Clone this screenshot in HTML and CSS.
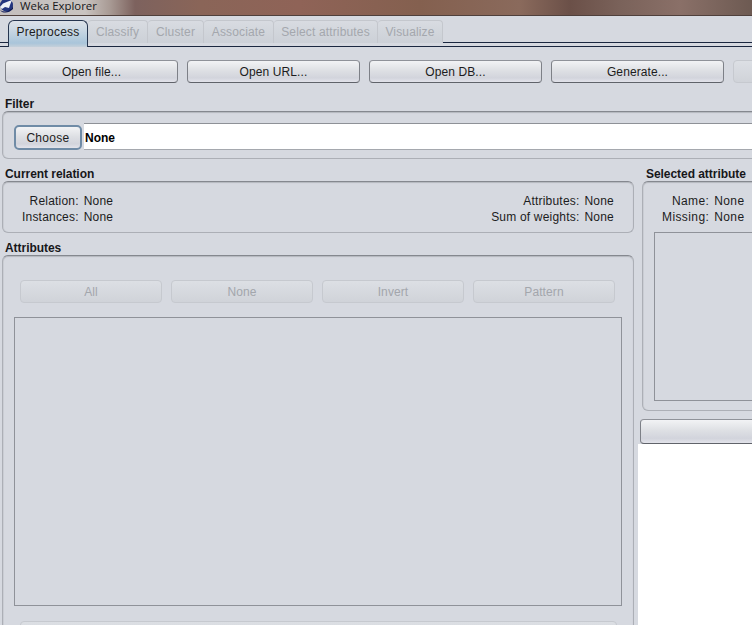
FILE: index.html
```html
<!DOCTYPE html>
<html lang="en">
<head>
<meta charset="utf-8">
<title>Weka Explorer</title>
<link rel="stylesheet" href="styles.css">
</head>
<body>
<div class="app">
  <header class="titlebar">
    <svg class="logo" width="14" height="13" viewBox="0 0 14 13" aria-hidden="true">
      <circle cx="6.5" cy="5" r="6.5" fill="#23357f"/>
      <path d="M0 7 L3 3.5 L8 1.5 L12 0 L10 5 L9 8 L5 7 L2 9 Z" fill="#eef1f7"/>
      <path d="M0 10 Q6 14 12 8 L13 5 L13 9 Q8 14 2 12 Z" fill="#101c58"/>
    </svg>
    <span class="title">Weka Explorer</span>
  </header>
  <nav class="tabstrip">
    <div class="tab-edge"></div>
    <div class="tab tab-active">Preprocess</div>
    <div class="tab">Classify</div>
    <div class="tab">Cluster</div>
    <div class="tab">Associate</div>
    <div class="tab">Select attributes</div>
    <div class="tab">Visualize</div>
    <div class="tab-rest"></div>
  </nav>
  <div class="toolbar">
    <button class="btn btn-wide">Open file...</button>
    <button class="btn btn-wide">Open URL...</button>
    <button class="btn btn-wide">Open DB...</button>
    <button class="btn btn-wide">Generate...</button>
    <button class="btn btn-wide btn-off"></button>
  </div>
  <section class="filter">
    <h2 class="label">Filter</h2>
    <div class="box filter-box">
      <button class="btn btn-choose">Choose</button>
      <div class="filter-field">None</div>
    </div>
  </section>
  <div class="columns">
    <div class="col-left">
      <h2 class="label">Current relation</h2>
      <div class="box relation-box">
        <dl class="info">
          <dt>Relation:</dt><dd>None</dd>
          <dt>Instances:</dt><dd>None</dd>
        </dl>
        <dl class="info">
          <dt>Attributes:</dt><dd>None</dd>
          <dt>Sum of weights:</dt><dd>None</dd>
        </dl>
      </div>
      <h2 class="label label-attr">Attributes</h2>
      <div class="box attr-box">
        <div class="attr-buttons">
          <button class="btn btn-off btn-attr">All</button>
          <button class="btn btn-off btn-attr">None</button>
          <button class="btn btn-off btn-attr">Invert</button>
          <button class="btn btn-off btn-attr">Pattern</button>
        </div>
        <div class="attr-list"></div>
        <button class="btn btn-off btn-remove"></button>
      </div>
    </div>
    <div class="col-right">
      <h2 class="label label-sel">Selected attribute</h2>
      <div class="box selected-box">
        <dl class="info">
          <dt>Name:</dt><dd>None</dd>
          <dt>Missing:</dt><dd>None</dd>
        </dl>
        <div class="selected-list"></div>
      </div>
      <button class="btn btn-vis"></button>
      <div class="canvas"></div>
    </div>
  </div>
</div>
</body>
</html>
```

FILE: styles.css
```css
* { box-sizing: border-box; }
html, body { margin: 0; height: 625px; overflow: hidden; background: #d6d9e0; }
.app {
  width: 900px;
  height: 625px;
  display: flex;
  flex-direction: column;
  font-family: "Liberation Sans", Arial, sans-serif;
  font-size: 12px;
  color: #1c1c20;
  background: #d6d9e0;
}
.titlebar {
  flex: none;
  height: 16px;
  display: flex;
  align-items: flex-start;
  overflow: hidden;
  border-bottom: 1px solid #4f403c;
  background: linear-gradient(90deg, #c4bfbe 0, #c9c3c0 85px, #a89a94 110px, #7d625e 135px, #8a6558 200px, #8f6357 300px, #84604f 420px, #8a6a5c 520px, #6b5048 570px, #7a625a 620px, #8a7068 680px, #6d5a52 752px);
}
.logo { flex: none; margin: 0 5px 0 0; }
.title {
  margin-left: 1px;
  font-family: "Open Sans", sans-serif;
  font-size: 11.4px;
  line-height: 12px;
  color: #17171a;
}
.tabstrip {
  flex: none;
  height: 31px;
  display: grid;
  grid-template-columns: 8px 80px 60px 56px 70px 104px 65px 1fr;
  align-items: start;
  border-bottom: 1px solid #1b2740;
}
.tab-edge, .tab-rest { height: 27px; border-bottom: 1px solid #1b2740; }
.tab {
  height: 23px;
  margin-top: 4px;
  line-height: 22px;
  text-align: center;
  letter-spacing: 0.15px;
  color: #a4a7ad;
  border: 1px solid #c4c7cd;
  border-bottom: 0;
  border-left: 0;
  border-radius: 4px 4px 0 0;
  background: linear-gradient(#d8dbe1, #ccd0d7);
}
.tab-active {
  height: 27px;
  letter-spacing: 0.25px;
  color: #1c1c20;
  border: 1px solid #26354f;
  border-bottom: 0;
  border-radius: 6px 6px 0 0;
  background: linear-gradient(#dde2e8 0, #cdd9e4 30%, #a9c5da 85%, #c5d0da 100%);
}
.toolbar {
  flex: none;
  display: flex;
  gap: 9px;
  padding: 13px 5px 0;
}
.btn {
  flex: none;
  display: block;
  height: 23px;
  padding: 0;
  font: inherit;
  letter-spacing: 0.1px;
  color: #1c1c20;
  border: 1px solid #7d8087;
  border-top-color: #8f9299;
  border-bottom-color: #60636a;
  border-radius: 4px;
  background: linear-gradient(#f2f3f5 0, #dee0e4 45%, #d2d4dc 80%, #e2e3ea 100%);
}
.btn-wide { width: 173px; }
.btn-off {
  color: #a3a6ac;
  border-color: #c6c9cf;
  background: linear-gradient(#dcdfe4, #d0d3d9);
}
.label {
  margin: 0;
  height: 15px;
  padding: 1px 0 0 5px;
  font-size: 12px;
  line-height: 15px;
  letter-spacing: -0.05px;
  font-weight: 700;
  color: #17171a;
}
.filter { flex: none; margin-top: 13px; }
.box {
  border: 1px solid #acafb6;
  border-top-color: #85888f;
  border-radius: 6px;
  box-shadow: inset 0 1px 1px #b4b7be, inset 1px 0 0 #cdd0d6;
}
.filter-box {
  margin-left: 2px;
  height: 48px;
  padding: 11px 11px 0;
  display: flex;
  align-items: flex-start;
  gap: 2px;
}
.btn-choose {
  width: 68px;
  height: 25px;
  margin-top: 2px;
  letter-spacing: 0.3px;
  border: 2px solid #6f8ba6;
  border-radius: 5px;
}
.filter-field {
  flex: 1;
  height: 27px;
  padding: 2px 1px 0;
  line-height: 25px;
  font-weight: 700;
  color: #000;
  background: #fff;
  border-top: 1px solid #8e9197;
  border-bottom: 1px solid #a5a8ae;
}
.columns { flex: 1; min-height: 0; display: flex; margin-top: 7px; }
.col-left { flex: none; width: 634px; padding-left: 2px; }
.col-left .label { padding-left: 3px; }
.label-attr { margin-top: 7px; }
.relation-box {
  height: 52px;
  padding: 11px 19px 0;
  display: flex;
  justify-content: space-between;
}
.info {
  margin: 0;
  width: fit-content;
  display: grid;
  grid-template-columns: auto auto;
  grid-auto-rows: 16px;
  column-gap: 5px;
  line-height: 16px;
  letter-spacing: 0.2px;
}
.info dt { text-align: right; }
.info dd { margin: 0; }
.attr-box { height: 400px; padding: 24px 11px 0; }
.attr-buttons { display: flex; gap: 9px; padding-left: 6px; }
.btn-attr { width: 142px; }
.attr-list {
  height: 289px;
  margin-top: 14px;
  border: 1px solid #8f9299;
}
.btn-remove { width: 597px; margin: 15px 0 0 6px; }
.col-right {
  flex: 1;
  min-width: 0;
  margin-left: 4px;
  display: flex;
  flex-direction: column;
}
.label-sel { padding-left: 8px; flex: none; }
.selected-box {
  flex: none;
  height: 230px;
  margin-left: 4px;
  padding: 11px 11px 0 19px;
}
.selected-box .info { letter-spacing: 0.4px; }
.selected-list {
  height: 169px;
  margin: 7px 0 0 -8px;
  border: 1px solid #8f9299;
}
.btn-vis { flex: none; width: 240px; height: 25px; margin: 8px 0 0 2px; }
.canvas { flex: 1; background: #fff; }
```
